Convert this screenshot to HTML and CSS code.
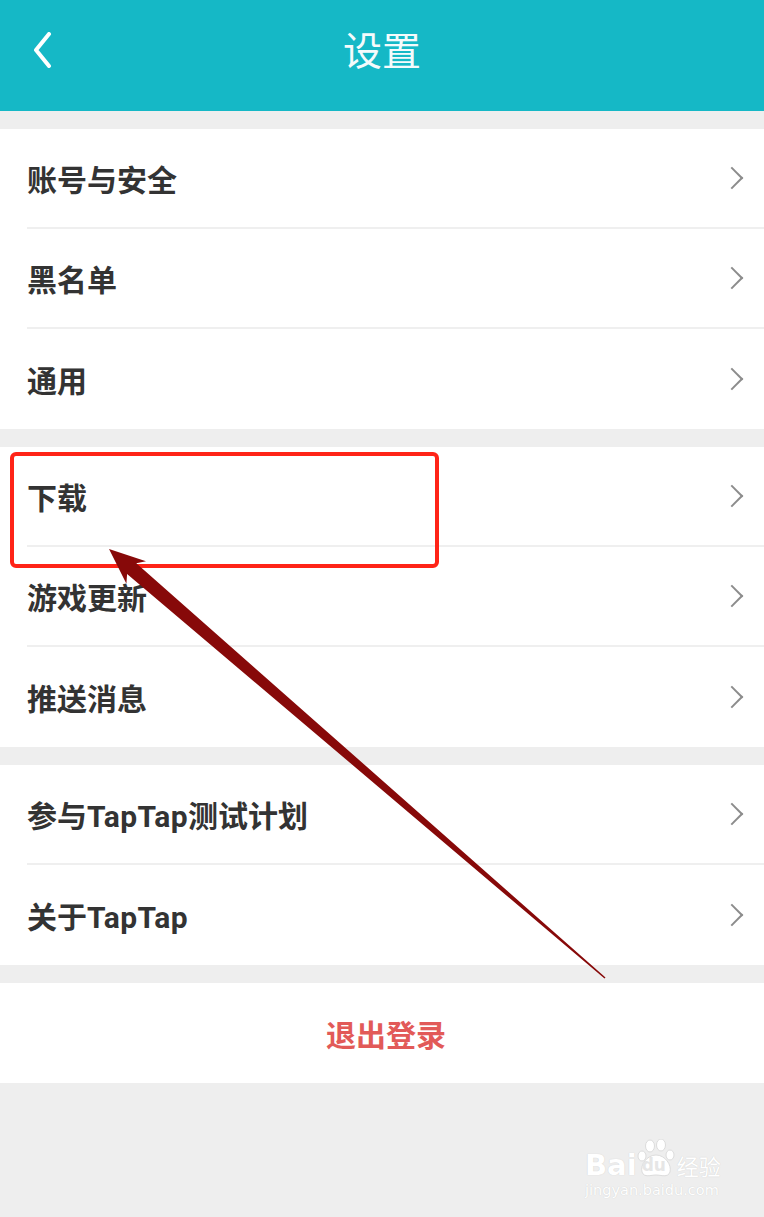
FILE: index.html
```html
<!DOCTYPE html>
<html lang="zh-CN">
<head>
    <meta charset="UTF-8">
    <meta name="viewport" content="width=device-width, initial-scale=1.0">
    <title>设置</title>
    <link rel="stylesheet" href="styles.css">
</head>
<body>
    <div class="screen">
        <header class="topbar">
            <svg class="back" width="20" height="36" viewBox="0 0 20 36">
                <path d="M17 2 L4 18 L17 34" fill="none" stroke="#fff" stroke-width="4" stroke-linecap="round" stroke-linejoin="round"/>
            </svg>
            <h1>设置</h1>
        </header>

        <section class="group">
            <div class="row"><span>账号与安全</span><i class="chev"></i></div>
            <div class="row"><span>黑名单</span><i class="chev"></i></div>
            <div class="row"><span>通用</span><i class="chev"></i></div>
        </section>

        <section class="group">
            <div class="row"><span>下载</span><i class="chev"></i></div>
            <div class="row"><span>游戏更新</span><i class="chev"></i></div>
            <div class="row"><span>推送消息</span><i class="chev"></i></div>
        </section>

        <section class="group">
            <div class="row"><span>参与<em>TapTap</em>测试计划</span><i class="chev"></i></div>
            <div class="row"><span>关于<em>TapTap</em></span><i class="chev"></i></div>
        </section>

        <section class="group logout">
            <span>退出登录</span>
        </section>

        <!-- annotation drawn on top of the screenshot -->
        <div class="mark-box"></div>
        <svg class="mark-arrow" width="764" height="1217" viewBox="0 0 764 1217">
            <polygon points="109,549 146,561.2 136.3,563.3 605.5,977.5 604.5,978.5 127.1,573.9 126.4,583.8" fill="#870909"/>
        </svg>

        <div class="watermark">
            <div class="wm-logo">
                <span class="wm-bai">Bai</span>
                <span class="wm-paw">
                    <svg width="40" height="40" viewBox="0 0 40 40">
                        <ellipse cx="13" cy="7" rx="4.5" ry="6" fill="#fff" stroke="#dcdcdc"/>
                        <ellipse cx="24" cy="6" rx="4.5" ry="6" fill="#fff" stroke="#dcdcdc"/>
                        <ellipse cx="5" cy="17" rx="4" ry="5" fill="#fff" stroke="#dcdcdc"/>
                        <ellipse cx="33" cy="16" rx="4" ry="5" fill="#fff" stroke="#dcdcdc"/>
                        <path d="M19 16 C10 16 3 26 5 33 C7 39 14 36 19 36 C24 36 31 39 33 33 C35 26 28 16 19 16 Z" fill="#fff" stroke="#dcdcdc"/>
                    </svg>
                    <b>du</b>
                </span>
                <span class="wm-cn">经验</span>
            </div>
            <div class="wm-url">jingyan.baidu.com</div>
        </div>
    </div>
</body>
</html>
```

FILE: styles.css
```css
body {
    margin: 0;
    background-color: #eeeeee;
    font-family: Roboto, "Noto Sans CJK SC", sans-serif;
}
.screen {
    position: relative;
    width: 764px;
    height: 1217px;
    overflow: hidden;
    background-color: #eeeeee;
}
.topbar {
    height: 111px;
    background-color: #15b8c6;
    display: flex;
    align-items: center;
    justify-content: center;
    position: relative;
}
.topbar h1 {
    margin: 0 0 16px 0;
    color: #f4fbfc;
    font-family: "Noto Sans CJK SC", sans-serif;
    font-weight: 400;
    font-size: 39px;
}
.back {
    position: absolute;
    left: 32px;
    top: 32px;
}
.group {
    margin-top: 18px;
    background-color: #fff;
}
.row {
    height: 100px;
    margin-left: 27px;
    padding-right: 20px;
    box-sizing: border-box;
    display: flex;
    align-items: center;
    justify-content: space-between;
    border-bottom: 2px solid #efefef;
    color: #333;
    font-size: 30px;
    font-weight: 700;
}
.row:last-child {
    border-bottom: none;
}
.row em {
    font-style: normal;
    letter-spacing: 0.4px;
}
.chev {
    width: 14px;
    height: 14px;
    border-top: 2.5px solid #8c8c8c;
    border-right: 2.5px solid #8c8c8c;
    transform: rotate(45deg);
    margin-right: 4px;
}
.logout {
    height: 100px;
    display: flex;
    align-items: center;
    justify-content: center;
    color: #e25a58;
    font-size: 30px;
    font-weight: 700;
}
.logout span {
    margin-left: 8px;
}
.mark-box {
    position: absolute;
    left: 10px;
    top: 452px;
    width: 421px;
    height: 108px;
    border: 4px solid #ff2418;
    border-radius: 6px;
}
.mark-arrow {
    position: absolute;
    left: 0;
    top: 0;
}
.watermark {
    position: absolute;
    left: 585px;
    top: 1133px;
    color: #fff;
    text-shadow: 0 0 1px #c8c8c8;
}
.wm-logo {
    display: flex;
    align-items: flex-end;
    height: 48px;
}
.wm-bai {
    font-family: "DejaVu Sans", sans-serif;
    font-size: 29px;
    font-weight: 700;
    line-height: 32px;
}
.wm-paw {
    position: relative;
    width: 40px;
    height: 46px;
}
.wm-paw svg {
    position: absolute;
    left: 0;
    top: 4px;
}
.wm-paw b {
    position: absolute;
    left: 5px;
    top: 20px;
    font-family: "DejaVu Sans", sans-serif;
    font-size: 17px;
    color: #e6e6e6;
    text-shadow: none;
}
.wm-cn {
    font-family: "Noto Sans CJK SC", sans-serif;
    font-size: 22px;
    line-height: 32px;
}
.wm-url {
    font-family: "DejaVu Sans", sans-serif;
    font-size: 14.5px;
    margin-top: 1px;
}
```
